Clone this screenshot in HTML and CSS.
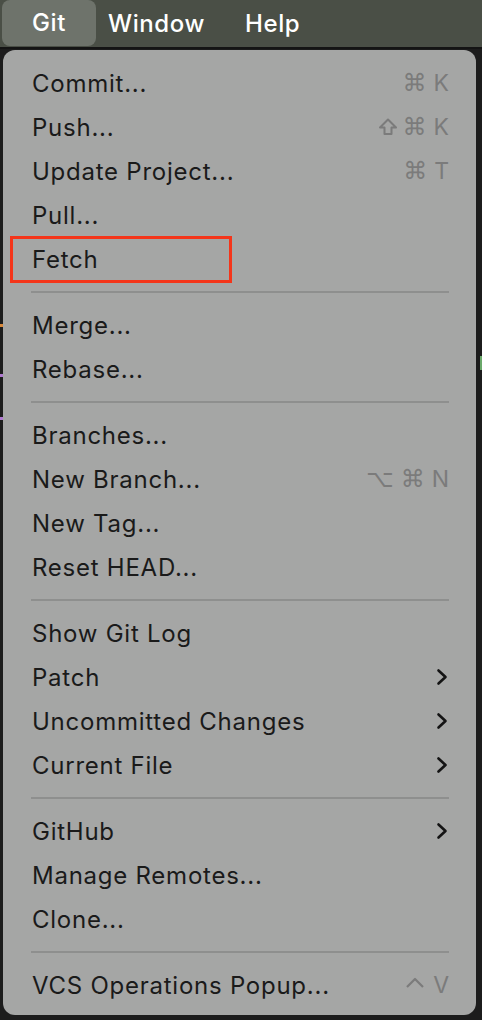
FILE: index.html
```html
<!DOCTYPE html>
<html>
<head>
<meta charset="utf-8">
<link rel="stylesheet" href="styles.css">
</head>
<body>
<div class="screen">
  <div class="menubar">
    <div class="mb-item mb-active">Git</div>
    <div class="mb-item mb-window">Window</div>
    <div class="mb-item mb-help">Help</div>
  </div>
  <div class="bar-line"></div>
  <div class="editor">
    <span class="code-mark mark-orange"></span>
    <span class="code-mark mark-purple1"></span>
    <span class="code-mark mark-purple2"></span>
    <span class="code-mark mark-green"></span>
    <div class="menu">
      <div class="row"><span class="label">Commit...</span><span class="keys"><span class="sym">⌘</span><span>K</span></span></div>
      <div class="row"><span class="label">Push...</span><span class="keys"><svg class="shift" width="20" height="20" viewBox="0 0 20 20"><path d="M10 2.5 L18 10.5 H13.5 V17 H6.5 V10.5 H2 Z" fill="none" stroke="#7b7b7b" stroke-width="2" stroke-linejoin="round"/></svg><span class="sym">⌘</span><span>K</span></span></div>
      <div class="row"><span class="label">Update Project...</span><span class="keys"><span class="sym">⌘</span><span>T</span></span></div>
      <div class="row"><span class="label">Pull...</span></div>
      <div class="row row-marked"><span class="label">Fetch</span><span class="highlight-box"></span></div>
      <div class="sep"></div>
      <div class="row"><span class="label">Merge...</span></div>
      <div class="row"><span class="label">Rebase...</span></div>
      <div class="sep"></div>
      <div class="row"><span class="label">Branches...</span></div>
      <div class="row"><span class="label">New Branch...</span><span class="keys"><span class="sym">⌥</span><span class="sym">⌘</span><span>N</span></span></div>
      <div class="row"><span class="label">New Tag...</span></div>
      <div class="row"><span class="label">Reset HEAD...</span></div>
      <div class="sep"></div>
      <div class="row"><span class="label">Show Git Log</span></div>
      <div class="row"><span class="label">Patch</span><svg class="chev" width="12" height="18" viewBox="0 0 12 18"><polyline points="2.5,2.5 9.5,9 2.5,15.5" fill="none" stroke="#141414" stroke-width="2.6" stroke-linecap="round" stroke-linejoin="round"/></svg></div>
      <div class="row"><span class="label">Uncommitted Changes</span><svg class="chev" width="12" height="18" viewBox="0 0 12 18"><polyline points="2.5,2.5 9.5,9 2.5,15.5" fill="none" stroke="#141414" stroke-width="2.6" stroke-linecap="round" stroke-linejoin="round"/></svg></div>
      <div class="row"><span class="label">Current File</span><svg class="chev" width="12" height="18" viewBox="0 0 12 18"><polyline points="2.5,2.5 9.5,9 2.5,15.5" fill="none" stroke="#141414" stroke-width="2.6" stroke-linecap="round" stroke-linejoin="round"/></svg></div>
      <div class="sep"></div>
      <div class="row"><span class="label">GitHub</span><svg class="chev" width="12" height="18" viewBox="0 0 12 18"><polyline points="2.5,2.5 9.5,9 2.5,15.5" fill="none" stroke="#141414" stroke-width="2.6" stroke-linecap="round" stroke-linejoin="round"/></svg></div>
      <div class="row"><span class="label">Manage Remotes...</span></div>
      <div class="row"><span class="label">Clone...</span></div>
      <div class="sep"></div>
      <div class="row"><span class="label">VCS Operations Popup...</span><span class="keys"><svg class="ctrl" width="22" height="20" viewBox="0 0 22 20"><polyline points="3,12 11,4 19,12" fill="none" stroke="#7b7b7b" stroke-width="2.2" stroke-linejoin="round"/></svg><span>V</span></span></div>
    </div>
  </div>
</div>
</body>
</html>
```

FILE: styles.css
```css
* { box-sizing: border-box; }
html, body {
  margin: 0;
  padding: 0;
  background: #1c1c1c;
}
.screen {
  width: 482px;
  height: 1020px;
  overflow: hidden;
  font-family: Inter, "Noto Sans", "DejaVu Sans", sans-serif;
}
.menubar {
  height: 47px;
  background: #4a4f46;
  display: flex;
  align-items: center;
  padding-left: 2px;
}
.mb-item {
  color: #ffffff;
  font-size: 24px;
  font-weight: 500;
  line-height: 45px;
  letter-spacing: 0.6px;
}
.mb-active {
  background: #6e736b;
  border-radius: 8px;
  width: 94px;
  height: 46px;
  padding-left: 30px;
  margin-top: -1px;
}
.mb-window { margin-left: 12px; }
.mb-help { margin-left: 40px; }
.bar-line {
  height: 2px;
  background: #141414;
}
.editor {
  position: relative;
  padding: 1px 6px 0 3px;
}
.code-mark {
  position: absolute;
  width: 3px;
  height: 3px;
}
.mark-orange { left: 0; top: 275px; background: #d98a3c; }
.mark-purple1 { left: 0; top: 325px; background: #b07ad0; }
.mark-purple2 { left: 0; top: 368px; background: #b07ad0; }
.mark-green { right: 0; top: 307px; height: 14px; width: 2px; background: #6aa86a; }
.menu {
  position: relative;
  background: #a5a6a5;
  border-radius: 12px;
  padding: 11px 0 8px 0;
  height: 965px;
}
.row {
  position: relative;
  height: 44px;
  display: flex;
  align-items: center;
  justify-content: space-between;
  padding: 0 27px 0 29px;
  font-size: 24px;
  color: #1a1a1a;
  letter-spacing: 0.75px;
}
.keys {
  display: flex;
  align-items: center;
  gap: 7px;
  color: #7b7b7b;
  font-size: 23px;
  letter-spacing: 0;
}
.keys .sym {
  font-family: "DejaVu Sans", sans-serif;
  font-size: 24px;
}
.shift { margin-right: -2px; }
.ctrl { margin-right: 0; }
.chev {
  margin-right: 1px;
}
.sep {
  height: 22px;
  display: flex;
  align-items: center;
  padding: 0 27px 0 28px;
}
.sep::before {
  content: "";
  display: block;
  width: 100%;
  height: 2px;
  background: #8e8f8e;
}
.highlight-box {
  position: absolute;
  left: 7px;
  top: -1px;
  width: 222px;
  height: 47px;
  border: 3px solid #f4351a;
}
```
